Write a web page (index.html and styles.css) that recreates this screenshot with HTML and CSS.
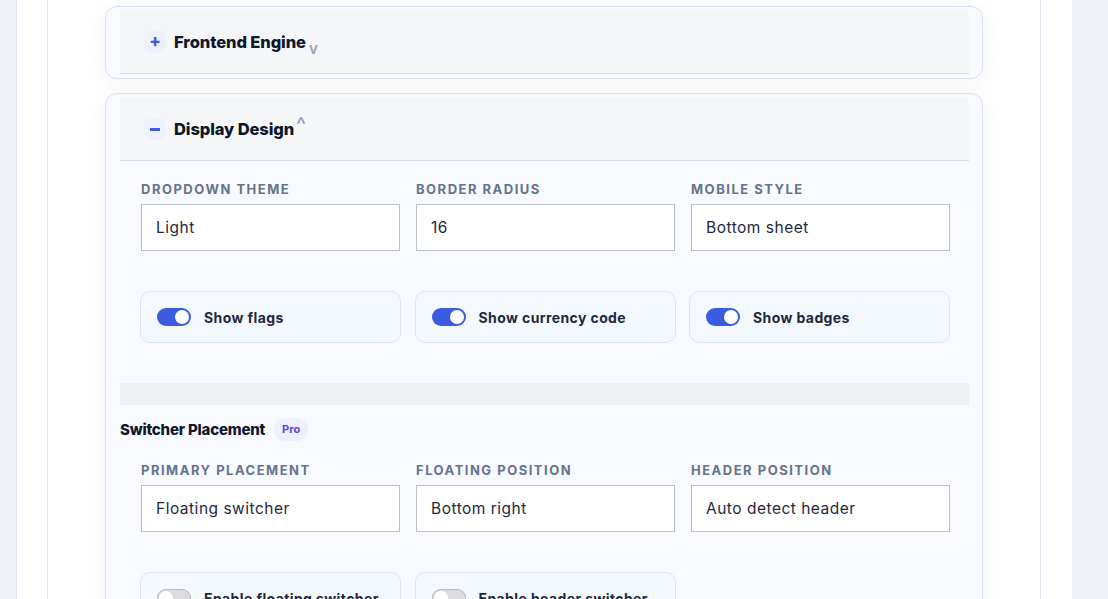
FILE: index.html
```html
<!DOCTYPE html>
<html lang="en">
<head>
    <meta charset="UTF-8">
    <meta name="viewport" content="width=device-width, initial-scale=1.0">
    <title>Switcher Settings</title>
    <link rel="stylesheet" href="styles.css">
</head>
<body>

    <div class="page">
        <div class="panel">

            <section class="card">
                <div class="card-head">
                    <span class="head-icon">+</span>
                    <h2>Frontend Engine</h2>
                    <span class="chev chev-down">v</span>
                </div>
            </section>

            <section class="card">
                <div class="card-head">
                    <span class="head-icon minus"></span>
                    <h2>Display Design</h2>
                    <span class="chev chev-up">^</span>
                </div>

                <div class="card-body">
                    <div class="fields">
                        <div class="field">
                            <label>Dropdown theme</label>
                            <div class="box">Light</div>
                        </div>
                        <div class="field">
                            <label>Border radius</label>
                            <div class="box">16</div>
                        </div>
                        <div class="field">
                            <label>Mobile style</label>
                            <div class="box">Bottom sheet</div>
                        </div>
                    </div>

                    <div class="toggles">
                        <div class="toggle-card"><span class="switch on"></span>Show flags</div>
                        <div class="toggle-card"><span class="switch on"></span>Show currency code</div>
                        <div class="toggle-card"><span class="switch on"></span>Show badges</div>
                    </div>

                    <div class="divider"></div>

                    <div class="sub-head">
                        <h3>Switcher Placement</h3>
                        <span class="pro">Pro</span>
                    </div>

                    <div class="fields">
                        <div class="field">
                            <label>Primary placement</label>
                            <div class="box">Floating switcher</div>
                        </div>
                        <div class="field">
                            <label>Floating position</label>
                            <div class="box">Bottom right</div>
                        </div>
                        <div class="field">
                            <label>Header position</label>
                            <div class="box">Auto detect header</div>
                        </div>
                    </div>

                    <div class="toggles">
                        <div class="toggle-card"><span class="switch"></span>Enable floating switcher</div>
                        <div class="toggle-card"><span class="switch"></span>Enable header switcher</div>
                    </div>
                </div>
            </section>

        </div>
    </div>

</body>
</html>
```

FILE: styles.css
```css
body{
  margin: 0;
  background: #f0f2f7;
  font-family: 'Inter', 'Noto Sans', sans-serif;
  color: #1e293b;
}

.page{
  margin-left: 16px;
  width: 1055px;
  min-height: 100vh;
  background: #fff;
  border-left: 1px solid #dde3ee;
}

.panel{
  margin-left: 30px;
  width: 992px;
  min-height: 100vh;
  border-left: 1px solid #dde3ee;
  border-right: 1px solid #dde3ee;
  padding-top: 6px;
}

.card{
  margin: 0 0 14px 57px;
  width: 849px;
  padding: 4px 13px 4px 14px;
  background: #f8faff;
  border: 1px solid #dbe3f1;
  border-radius: 12px;
  box-shadow: 0 4px 22px rgba(15, 23, 42, 0.05);
}

.card-head{
  display: flex;
  align-items: center;
  height: 62px;
  padding-left: 24px;
  background: #f5f6f7;
  border-bottom: 1px solid #d9dde4;
}

.head-icon{
  width: 22px;
  height: 22px;
  border-radius: 7px;
  background: #edf1fe;
  color: #3b5bdb;
  font-size: 17px;
  font-weight: 800;
  line-height: 21px;
  text-align: center;
  margin-right: 8px;
  position: relative;
}

.head-icon.minus::after{
  content: "";
  position: absolute;
  left: 6px;
  top: 10px;
  width: 10px;
  height: 2.5px;
  background: #3b5bdb;
}

.card-head h2{
  margin: 0;
  font-size: 16.5px;
  font-weight: 800;
  letter-spacing: -0.1px;
  color: #0f172a;
}

.chev{
  color: #94a3b8;
  font-weight: 600;
  margin-left: 3px;
}

.chev-down{
  font-size: 15px;
  margin-top: 13px;
}

.chev-up{
  font-size: 21px;
  font-weight: 500;
  margin-top: -10px;
  margin-left: 2px;
}

.card-body{
  padding: 20px 0 20px;
}

.fields{
  display: grid;
  grid-template-columns: repeat(3, 259px);
  gap: 16px;
  padding: 0 21px;
}

.field label{
  display: block;
  font-size: 13px;
  font-weight: 700;
  text-transform: uppercase;
  letter-spacing: 1.5px;
  color: #64748b;
  line-height: 16px;
  margin-bottom: 7px;
}

.box{
  height: 45px;
  border: 1px solid #b9c0cd;
  background: #fff;
  padding-left: 14px;
  font-size: 15.5px;
  letter-spacing: 0.5px;
  line-height: 45px;
  color: #1e293b;
}

.toggles{
  display: grid;
  grid-template-columns: repeat(3, 261px);
  gap: 13.5px;
  padding: 0 20px;
  margin-top: 40px;
}

.toggle-card{
  display: flex;
  align-items: center;
  height: 50px;
  padding-left: 16px;
  background: #f4f8ff;
  border: 1px solid #dfe6f1;
  border-radius: 10px;
  font-size: 14px;
  font-weight: 700;
  letter-spacing: 0.4px;
  color: #1e293b;
}

.switch{
  position: relative;
  width: 34px;
  height: 18px;
  border-radius: 9px;
  background: #dcdcdf;
  box-shadow: inset 0 0 0 1px #b8bcc4;
  margin-right: 13px;
  flex-shrink: 0;
}

.switch::after{
  content: "";
  position: absolute;
  left: 2px;
  top: 2px;
  width: 14px;
  height: 14px;
  border-radius: 50%;
  background: #fff;
}

.switch.on{
  background: #3b5be0;
  box-shadow: none;
}

.switch.on::after{
  left: 18px;
}

.divider{
  height: 22px;
  background: #eef0f4;
  margin-top: 40px;
}

.sub-head{
  display: flex;
  align-items: center;
  margin-top: 13px;
  margin-bottom: 21px;
}

.sub-head h3{
  margin: 0;
  font-size: 15px;
  font-weight: 800;
  letter-spacing: -0.2px;
  color: #0f172a;
}

.pro{
  margin-left: 9px;
  height: 23px;
  line-height: 23px;
  padding: 0 8px;
  border-radius: 12px;
  background: #eef0fd;
  color: #5b45e0;
  font-size: 11px;
  font-weight: 700;
}
```
